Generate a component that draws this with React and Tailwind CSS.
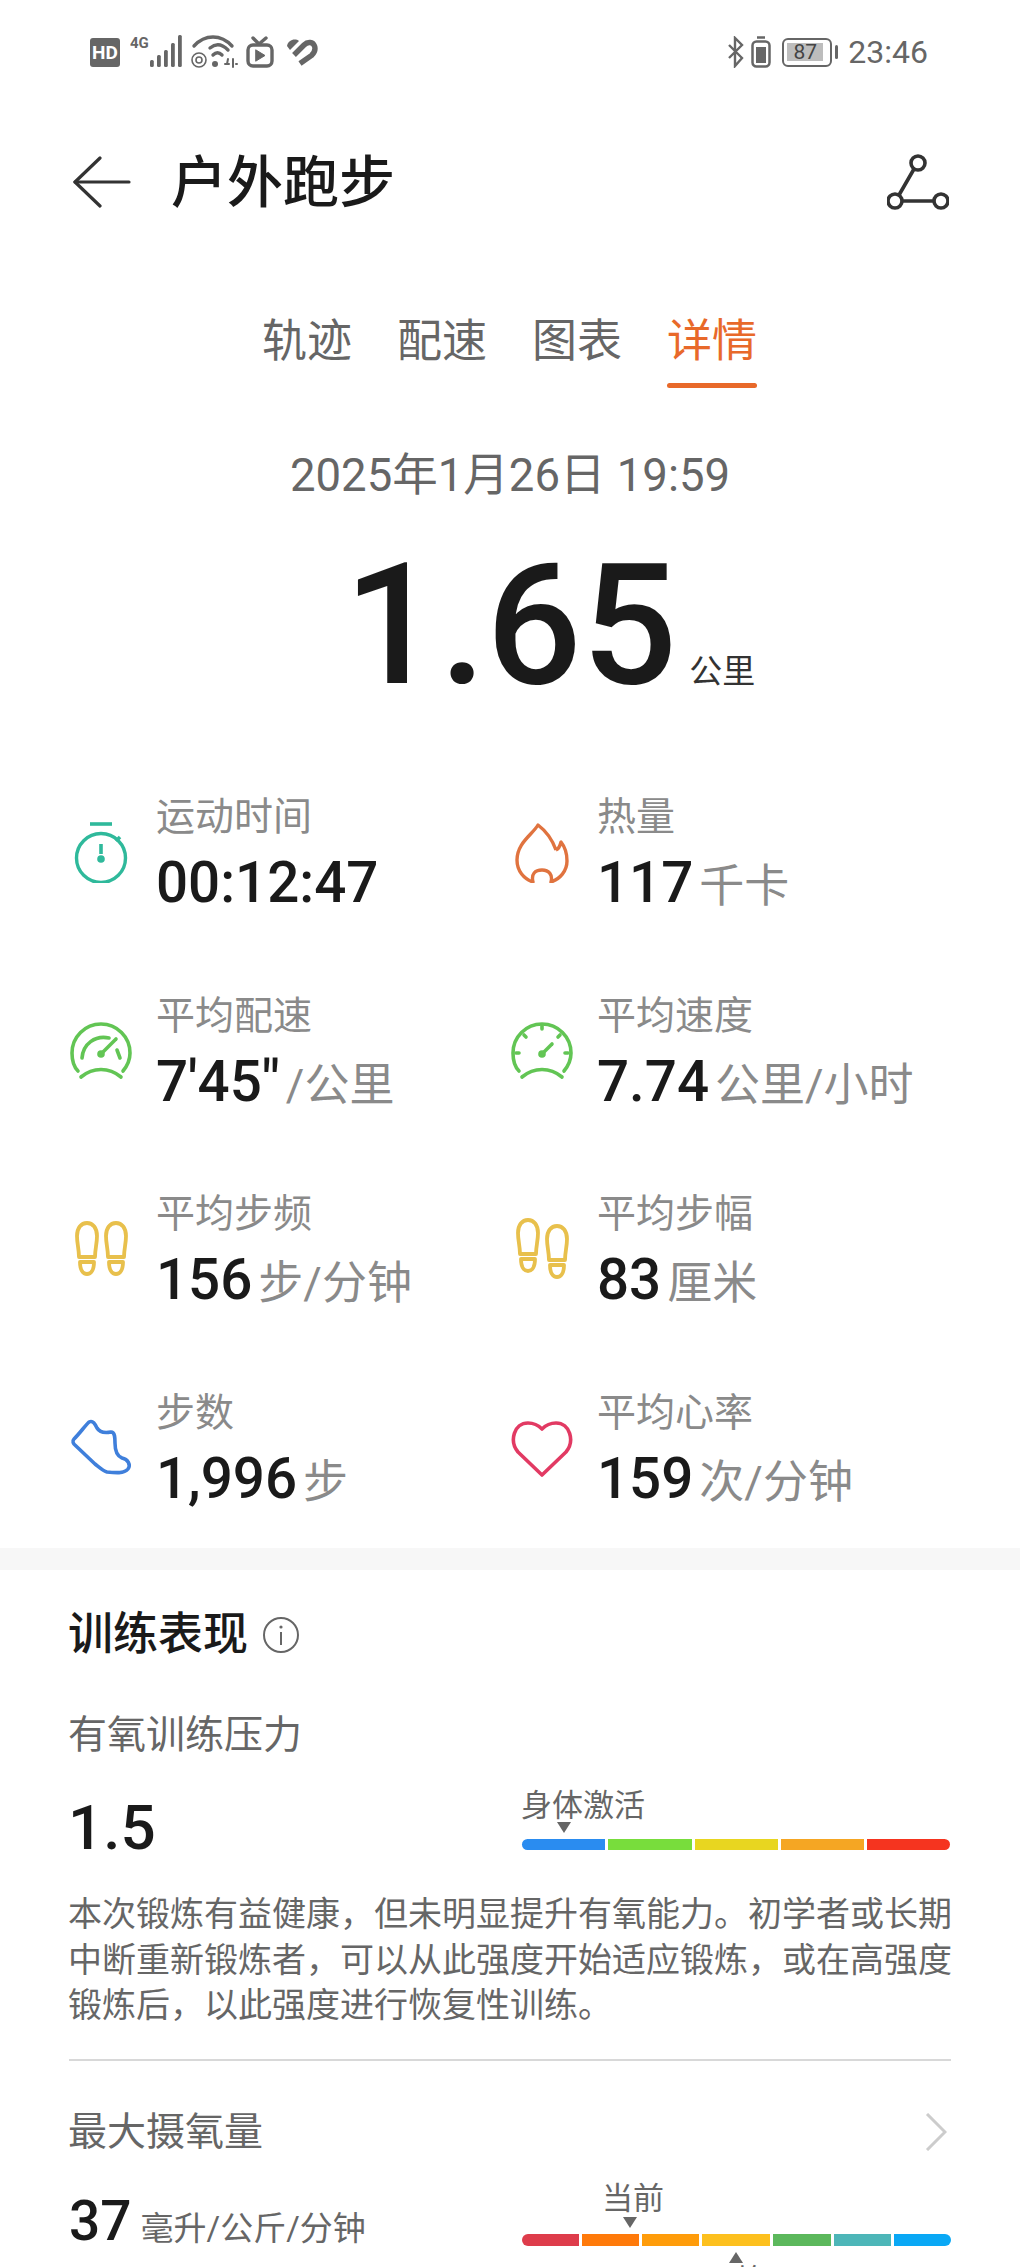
const cjk = "font-['Roboto','Noto_Sans_CJK_SC',sans-serif]";

// Status bar icons
const LeftStatusIcons = () => (
    <div className="flex items-center ml-[90px]">
        <div className="w-[30px] h-[29px] rounded-[3px] bg-[#666] flex items-center justify-center text-white text-[19px] leading-none font-bold font-['Roboto',sans-serif]">HD</div>
        <svg width="52" height="34" viewBox="0 0 52 34" className="ml-[10px] text-[#666]">
            <text x="0" y="13" fontSize="15" fontWeight="700" fill="currentColor" fontFamily="Roboto">4G</text>
            <g fill="currentColor">
                <rect x="20" y="25" width="3.8" height="7" rx="1.5" />
                <rect x="27" y="20" width="3.8" height="12" rx="1.5" />
                <rect x="34" y="15" width="3.8" height="17" rx="1.5" />
                <rect x="41" y="8" width="3.8" height="24" rx="1.5" />
                <rect x="48" y="0" width="3.8" height="32" rx="1.5" />
            </g>
        </svg>
        <svg width="48" height="34" viewBox="0 0 48 34" className="ml-[8px] text-[#666]" fill="none" stroke="currentColor" strokeWidth="3.4" strokeLinecap="round">
            <path d="M4 11C15 -1 31 -1 42 11" />
            <path d="M20 13C26 8 32 9 38 15" />
            <path d="M23 20C26 17 29 17 32 20" />
            <circle cx="9" cy="25" r="7" strokeWidth="1.6" />
            <circle cx="9" cy="25" r="3" strokeWidth="1.6" />
            <circle cx="25" cy="29" r="3" fill="currentColor" stroke="none" />
            <path d="M35 29H39M43 24V32M38 24L37 29M46 29H47" strokeWidth="2" />
        </svg>
        <svg width="28" height="32" viewBox="0 0 28 32" className="ml-[8px] text-[#666]" fill="none" stroke="currentColor" strokeWidth="3.4" strokeLinecap="round" strokeLinejoin="round">
            <path d="M7 2L13 8L20 2" />
            <rect x="2" y="9" width="24" height="21" rx="5" />
            <path d="M10 14L19 19.5L10 25Z" fill="currentColor" strokeWidth="1" />
        </svg>
        <svg width="32" height="28" viewBox="0 0 32 28" className="ml-[12px] text-[#666]" fill="none" stroke="currentColor" strokeWidth="5.4">
            <path d="M1 8C2 2 9 0 13 3L4 12Z" fill="currentColor" stroke="none" />
            <path d="M8 17L18 7C22 3 27 4 28.5 8C30 12 28 15 25.5 17.5L14 25.5" />
        </svg>
    </div>
);

const RightStatusIcons = () => (
    <div className="flex items-center mr-[92px] text-[#666]">
        <svg width="16" height="32" viewBox="0 0 16 32" fill="none" stroke="currentColor" strokeWidth="2.4">
            <path d="M1 9L14 22L7 30V2L14 9L1 22" />
        </svg>
        <svg width="20" height="32" viewBox="0 0 20 32" className="ml-[7px]" fill="none" stroke="currentColor">
            <path d="M6 1.5H14" strokeWidth="2.5" />
            <rect x="1.5" y="5.5" width="17" height="25" rx="4" strokeWidth="2.5" />
            <rect x="5" y="11" width="10" height="16" fill="currentColor" stroke="none" />
        </svg>
        <div className="ml-[11px] w-[50px] h-[29px] rounded-[6px] border-[2.5px] border-[#666] flex items-center pl-[3px]">
            <div className="w-[36px] h-[18px] bg-[#bdbdbd] flex items-center justify-center text-[21px] leading-none text-[#444] font-['Roboto',sans-serif]">87</div>
        </div>
        <div className="ml-[3px] w-[3px] h-[14px] bg-[#666] rounded-full" />
        <span className="ml-[10px] text-[32px] leading-none font-['Roboto',sans-serif]">23:46</span>
    </div>
);

// Stat icons, each drawn on a 64x64 box
const Stopwatch = () => (
    <svg width="64" height="64" viewBox="0 0 64 64" fill="none" stroke="#2fb99b" strokeWidth="3.4">
        <path d="M21 5H43" strokeWidth="3.6" />
        <circle cx="32" cy="39" r="24.5" />
        <path d="M32 25V35" strokeWidth="3.6" />
        <circle cx="32" cy="40" r="3.8" fill="#2fb99b" stroke="none" />
        <path d="M47 22L51 18" strokeWidth="3.6" />
    </svg>
);

const Flame = () => (
    <svg width="64" height="64" viewBox="0 0 64 64" fill="none" stroke="#e0733f" strokeWidth="3.4" strokeLinejoin="round">
        <path d="M46 31C42 20 36 12 28 6C22 16 7 24 7 41C7 52 14 60 23 63C21 55 25 51 32 51C39 51 43 56 41 63C50 60 57 52 57 42C57 35 55 28 51 23C50 27 49 30 46 31" />
    </svg>
);

const SpeedoOuter = () => (
    <>
        <path d="M9 53C4 48 3 41 3 35A29 29 0 0 1 61 35C61 42 59 47 54 53" />
        <path d="M12 59C24 49 40 49 52 59" />
    </>
);

const SpeedoPace = () => (
    <svg width="64" height="64" viewBox="0 0 64 64" fill="none" stroke="#62c554" strokeWidth="3.6" strokeLinecap="round">
        <SpeedoOuter />
        <path d="M13 40C14 26 26 17 40 20" />
        <path d="M48 32L51 40" />
        <path d="M32 36L47 21" />
        <circle cx="32" cy="36" r="3.8" fill="#62c554" stroke="none" />
    </svg>
);

const SpeedoAvg = () => (
    <svg width="64" height="64" viewBox="0 0 64 64" fill="none" stroke="#62c554" strokeWidth="3.6" strokeLinecap="round">
        <SpeedoOuter />
        <path d="M32 8V11M14 17L16 19M50 17L48 19M6 35H9M55 35H58" />
        <path d="M32 36L42 26" />
        <circle cx="32" cy="36" r="3.8" fill="#62c554" stroke="none" />
    </svg>
);

const Foot = ({ x, y }) => (
    <g transform={`translate(${x} ${y})`}>
        <path d="M11 1C5 1 1 6 1 14C1 22 3 27 3 35H19C19 27 21 22 21 14C21 6 17 1 11 1Z" />
        <path d="M4 40H18C18 48 15 52 11 52C7 52 4 48 4 40Z" />
    </g>
);

const Footprints = ({ stagger = 0 }) => (
    <svg width="64" height="64" viewBox="0 0 64 64" fill="none" stroke="#e8c04c" strokeWidth="3.8" strokeLinejoin="round">
        <Foot x={7} y={stagger ? 3 : 6} />
        <Foot x={36} y={stagger ? 9 : 6} />
    </svg>
);

const Shoe = () => (
    <svg width="64" height="64" viewBox="0 0 64 64" fill="none" stroke="#3f7fdb" strokeWidth="3.6" strokeLinejoin="round">
        <path d="M5 24C11 18 15 12 20 7C24 5 26 9 28 13C31 18 37 18 42 17C46 17 46 23 46 28C46 35 48 41 53 43C59 44 62 50 59 54C55 59 46 58 38 57C34 56 30 52 26 49L7 31C4 29 3 26 5 24Z" />
    </svg>
);

const Heart = () => (
    <svg width="64" height="64" viewBox="0 0 64 64" fill="none" stroke="#e23a63" strokeWidth="3.6" strokeLinejoin="round">
        <path d="M32 60L8 37C-1 26 4 8 18 8C24 8 29 11 32 14C35 11 40 8 46 8C60 8 65 26 56 37Z" />
    </svg>
);

const stats = [
    { icon: <Stopwatch />, label: '运动时间', value: '00:12:47', unit: '' },
    { icon: <Flame />, label: '热量', value: '117', unit: '千卡' },
    { icon: <SpeedoPace />, label: '平均配速', value: `7'45"`, unit: '/公里' },
    { icon: <SpeedoAvg />, label: '平均速度', value: '7.74', unit: '公里/小时' },
    { icon: <Footprints />, label: '平均步频', value: '156', unit: '步/分钟' },
    { icon: <Footprints stagger />, label: '平均步幅', value: '83', unit: '厘米' },
    { icon: <Shoe />, label: '步数', value: '1,996', unit: '步' },
    { icon: <Heart />, label: '平均心率', value: '159', unit: '次/分钟' },
];

const StatItem = ({ icon, label, value, unit }) => (
    <div className="flex items-start gap-[23px]">
        <div className="w-[64px] h-[64px] shrink-0 mt-[29px]">{icon}</div>
        <div className="pt-[3px]">
            <div className="text-[39px] leading-[48px] text-[#8a8a8a]">{label}</div>
            <div className="mt-[9px] h-[66px] flex items-baseline gap-[6px] whitespace-nowrap">
                <span className="text-[56.5px] leading-[66px] font-medium text-[#1a1a1a]">{value}</span>
                {unit && <span className="text-[45px] leading-[66px] text-[#8a8a8a]">{unit}</span>}
            </div>
        </div>
    </div>
);

const Triangle = ({ up, className }) => (
    <svg width="14" height="11" viewBox="0 0 14 11" className={className} fill="#666">
        {up ? <path d="M7 0L14 11H0Z" /> : <path d="M0 0H14L7 11Z" />}
    </svg>
);

const trainingSegments = [
    { w: 'w-[83px]', color: 'bg-[#2a8cf0]', round: 'rounded-l-full' },
    { w: 'w-[84px]', color: 'bg-[#78dd3c]', round: '' },
    { w: 'w-[83px]', color: 'bg-[#e8d620]', round: '' },
    { w: 'w-[83px]', color: 'bg-[#f5a623]', round: '' },
    { w: 'w-[83px]', color: 'bg-[#f5341f]', round: 'rounded-r-full' },
];

const vo2Segments = [
    { w: 'w-[57px]', color: 'bg-[#de3c4b]', round: 'rounded-l-full' },
    { w: 'w-[58px]', color: 'bg-[#ff7a0a]', round: '' },
    { w: 'w-[57px]', color: 'bg-[#ff9c0a]', round: '' },
    { w: 'w-[68px]', color: 'bg-[#fdc01e]', round: '' },
    { w: 'w-[58px]', color: 'bg-[#5cb85c]', round: '' },
    { w: 'w-[58px]', color: 'bg-[#4db6b8]', round: '' },
    { w: 'w-[57px]', color: 'bg-[#0aa8f5]', round: 'rounded-r-full' },
];

const Bar = ({ segments, className }) => (
    <div className={`flex gap-[3px] ${className}`}>
        {segments.map((s, i) => (
            <div key={i} className={`h-full ${s.w} ${s.color} ${s.round}`} />
        ))}
    </div>
);

export default function App() {
    return (
        <div className={`w-[1020px] h-[2267px] overflow-hidden bg-white ${cjk}`}>
            <div className="h-[104px] flex items-center justify-between">
                <LeftStatusIcons />
                <RightStatusIcons />
            </div>

            {/* Title bar */}
            <div className="h-[156px] flex items-center justify-between pl-[73px] pr-[71px]">
                <div className="flex items-center">
                    <svg width="58" height="52" viewBox="0 0 58 52" fill="none" stroke="#333" strokeWidth="3.2" strokeLinecap="round" strokeLinejoin="round">
                        <path d="M27 2L2 26L27 50" />
                        <path d="M2 26H56" />
                    </svg>
                    <h1 className="ml-[40px] mt-[2px] text-[56px] leading-[70px] font-medium text-[#1a1a1a]">户外跑步</h1>
                </div>
                <svg width="62" height="56" viewBox="0 0 62 56" fill="none" stroke="#333" strokeWidth="3.6">
                    <circle cx="31" cy="9" r="7" />
                    <circle cx="8" cy="47" r="7" />
                    <circle cx="54" cy="47" r="7" />
                    <path d="M27 15L12 41M15 47H47" />
                </svg>
            </div>

            {/* Tabs */}
            <div className="mt-[52px] -ml-[1px] flex justify-center gap-[45px] text-[45px] leading-[60px] text-[#666]">
                <span>轨迹</span>
                <span>配速</span>
                <span>图表</span>
                <div className="text-[#e8692a]">
                    <span>详情</span>
                    <div className="mt-[11px] h-[5px] rounded-full bg-[#e8692a]" />
                </div>
            </div>

            <div className="mt-[63px] text-center text-[45.5px] leading-[50px] text-[#666]">2025年1月26日 19:59</div>

            <div className="mt-[39px] pl-[344px] flex items-baseline">
                <span className="text-[168px] leading-[172px] font-medium text-[#1a1a1a]">1.65</span>
                <span className="ml-[12px] text-[33px] leading-[40px] text-[#333]">公里</span>
            </div>

            {/* Stats */}
            <div className="mt-[78px] pl-[69px] h-[758px] grid grid-cols-[441px_1fr] grid-rows-[198.5px_198.5px_198.5px_162.5px]">
                {stats.map(s => <StatItem key={s.label} {...s} />)}
            </div>

            <div className="h-[22px] bg-[#f7f7f7]" />

            <div className="px-[69px]">
                <div className="mt-[35px] flex items-center gap-[15px] -ml-[1px]">
                    <h2 className="text-[45px] leading-[60px] font-medium text-[#1a1a1a]">训练表现</h2>
                    <svg width="36" height="36" viewBox="0 0 36 36" fill="none" stroke="#666" strokeWidth="2">
                        <circle cx="18" cy="18" r="17" />
                        <path d="M18 15V28" />
                        <circle cx="18" cy="10" r="1.6" fill="#666" stroke="none" />
                    </svg>
                </div>

                <div className="mt-[46px] -ml-[1px] text-[39px] leading-[48px] text-[#666]">有氧训练压力</div>
                <div className="mt-[27px] flex items-start justify-between">
                    <span className="mt-[12px] -ml-[1px] text-[62px] leading-[60px] font-medium text-[#1a1a1a]">1.5</span>
                    <div className="w-[429px]">
                        <div className="-ml-[1px] text-[31px] leading-[40px] text-[#666]">身体激活</div>
                        <Triangle className="mt-[-4px] ml-[35px]" />
                        <Bar segments={trainingSegments} className="mt-[6px] h-[11px]" />
                    </div>
                </div>

                <p className="mt-[34px] -ml-[1px] text-[34px] leading-[45.5px] text-[#666] whitespace-nowrap">
                    本次锻炼有益健康，但未明显提升有氧能力。初学者或长期<br />
                    中断重新锻炼者，可以从此强度开始适应锻炼，或在高强度<br />
                    锻炼后，以此强度进行恢复性训练。
                </p>

                <div className="mt-[30px] h-[2px] bg-[#d8d8d8]" />

                <div className="mt-[47px] flex items-center justify-between">
                    <span className="-ml-[1px] text-[39px] leading-[48px] text-[#666]">最大摄氧量</span>
                    <svg width="22" height="38" viewBox="0 0 22 38" fill="none" stroke="#ccc" strokeWidth="3" className="mr-[4px]">
                        <path d="M2 1L20 19L2 37" />
                    </svg>
                </div>
                <div className="mt-[23px] flex items-start justify-between">
                    <div className="mt-[12px] flex items-baseline gap-[9px]">
                        <span className="text-[55px] leading-[60px] font-medium text-[#1a1a1a]">37</span>
                        <span className="text-[33px] leading-[40px] text-[#666]">毫升/公斤/分钟</span>
                    </div>
                    <div className="w-[429px]">
                        <div className="ml-[80px] text-[31px] leading-[40px] text-[#666]">当前</div>
                        <Triangle className="mt-[-2px] ml-[101px]" />
                        <Bar segments={vo2Segments} className="mt-[6px] h-[12px]" />
                        <Triangle up className="mt-[6px] ml-[207px]" />
                        <div className="mt-[-2px] ml-[183px] text-[31px] leading-[40px] text-[#666]">平均</div>
                    </div>
                </div>
            </div>
        </div>
    );
}
